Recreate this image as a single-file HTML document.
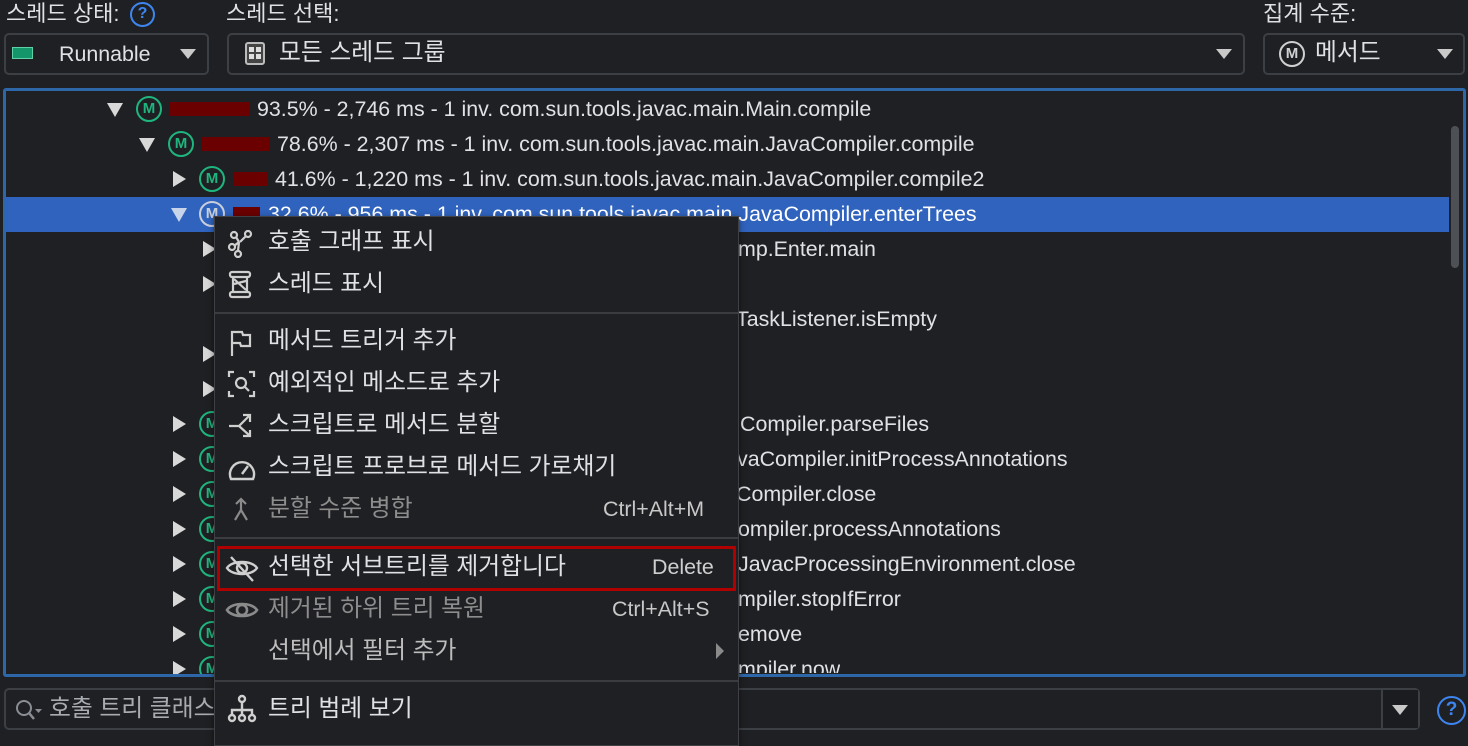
<!DOCTYPE html><html><head><meta charset="utf-8"><style>
*{box-sizing:border-box;margin:0;padding:0}
body{width:1468px;height:735px;background:#1f2023;color:#dfe1e5;font-family:"Liberation Sans","Noto Sans CJK KR",sans-serif;font-size:21.4px;position:relative;overflow:hidden}
.a{position:absolute;white-space:nowrap}
.k{font-size:22px}
.box{position:absolute;border:2px solid #3c3f44;border-radius:5px;background:#1f2023}
.tri{position:absolute;width:0;height:0;border-left:8px solid transparent;border-right:8px solid transparent;border-top:10px solid #c9c9c9}
.rt{position:absolute;width:0;height:0;border-top:8px solid transparent;border-bottom:8px solid transparent;border-left:13px solid #d8d8d8}
.dn{position:absolute;width:0;height:0;border-left:8px solid transparent;border-right:8px solid transparent;border-top:14px solid #d8d8d8}
.m{position:absolute;width:26px;height:26px;border:2.5px solid #1fb57e;border-radius:50%;color:#1fb57e;font-size:15px;font-weight:bold;text-align:center;line-height:21px}
.bar{position:absolute;height:14px;background:#6b0000}
.row{position:absolute;height:35px;line-height:35px}
.mi{position:absolute;left:268px;white-space:nowrap;line-height:30px;font-size:23.8px}
.sep{position:absolute;left:0;right:0;height:2px;background:#3a3c40}
</style></head><body>
<div class="a k" style="left:6px;top:0;line-height:28px">스레드 상태:</div>
<div class="a" style="left:130px;top:2px;width:25px;height:25px;border:2.5px solid #3d86f0;border-radius:50%;color:#3d86f0;text-align:center;font-size:16px;line-height:20px;font-weight:bold">?</div>
<div class="a k" style="left:226px;top:0;line-height:28px">스레드 선택:</div>
<div class="a k" style="left:1263px;top:0;line-height:28px">집계 수준:</div>

<div class="box" style="left:4px;top:33px;width:205px;height:42px"></div>
<div class="a" style="left:12px;top:47px;width:21px;height:12px;background:#14956a;border:1px solid #5fd0a5"></div>
<div class="a" style="left:59px;top:38px;line-height:32px">Runnable</div>
<div class="tri" style="left:180px;top:49px"></div>

<div class="box" style="left:227px;top:33px;width:1018px;height:42px"></div>
<div class="a" style="left:245px;top:42px;width:20px;height:23px;border:2px solid #bbb;border-radius:3px;background:#444"></div>
<div class="a" style="left:249px;top:47px;width:5px;height:5px;background:#ddd;box-shadow:7px 0 #ddd,0 7px #ddd,7px 7px #ddd"></div>
<div class="a" style="left:279px;top:37px;line-height:32px;font-size:23.8px">모든 스레드 그룹</div>
<div class="tri" style="left:1216px;top:49px"></div>

<div class="box" style="left:1263px;top:33px;width:202px;height:42px"></div>
<div class="a" style="left:1279px;top:41px;width:26px;height:26px;border:2.5px solid #d0d0d0;border-radius:50%;color:#d0d0d0;font-size:15px;font-weight:bold;text-align:center;line-height:21px">M</div>
<div class="a" style="left:1315px;top:37px;line-height:32px;font-size:23.8px">메서드</div>
<div class="tri" style="left:1437px;top:49px"></div>

<div class="a" style="left:3px;top:88px;width:1463px;height:589px;border:3px solid #2e67a7;border-radius:3px;overflow:hidden">
<div style="position:absolute;left:1445px;top:35px;width:8px;height:142px;background:#4d5055;border-radius:4px"></div>
<div style="position:absolute;left:0;top:106px;width:1443px;height:35px;background:#2f63bd"></div>
</div>

<div class="dn" style="left:107px;top:103px"></div><div class="m" style="left:136px;top:96px">M</div><div class="bar" style="left:170px;top:102px;width:79px"></div><div class="row a" style="left:257px;top:92px">93.5% - 2,746 ms - 1 inv. com.sun.tools.javac.main.Main.compile</div>
<div class="dn" style="left:139px;top:138px"></div><div class="m" style="left:168px;top:131px">M</div><div class="bar" style="left:201px;top:137px;width:69px"></div><div class="row a" style="left:277px;top:127px">78.6% - 2,307 ms - 1 inv. com.sun.tools.javac.main.JavaCompiler.compile</div>
<div class="rt" style="left:173px;top:171px"></div><div class="m" style="left:199px;top:166px">M</div><div class="bar" style="left:233px;top:172px;width:35px"></div><div class="row a" style="left:275px;top:162px">41.6% - 1,220 ms - 1 inv. com.sun.tools.javac.main.JavaCompiler.compile2</div>
<div class="dn" style="left:171px;top:208px;border-top-color:#c8d4ea"></div><div class="m" style="left:199px;top:201px;border-color:#c9cfdb;color:#c9cfdb">M</div><div class="bar" style="left:233px;top:207px;width:27px"></div><div class="row a" style="left:268px;top:197px;color:#fff">32.6% - 956 ms - 1 inv. com.sun.tools.javac.main.JavaCompiler.enterTrees</div>

<div class="rt" style="left:203px;top:241px"></div>
<div class="rt" style="left:203px;top:276px"></div>
<div class="rt" style="left:203px;top:346px"></div>
<div class="rt" style="left:203px;top:381px"></div>
<div class="rt" style="left:173px;top:416px"></div><div class="m" style="left:199px;top:411px">M</div>
<div class="rt" style="left:173px;top:451px"></div><div class="m" style="left:199px;top:446px">M</div>
<div class="rt" style="left:173px;top:486px"></div><div class="m" style="left:199px;top:481px">M</div>
<div class="rt" style="left:173px;top:521px"></div><div class="m" style="left:199px;top:516px">M</div>
<div class="rt" style="left:173px;top:556px"></div><div class="m" style="left:199px;top:551px">M</div>
<div class="rt" style="left:173px;top:591px"></div><div class="m" style="left:199px;top:586px">M</div>
<div class="rt" style="left:173px;top:626px"></div><div class="m" style="left:199px;top:621px">M</div>
<div class="a" style="left:170px;top:656px;width:60px;height:18px;overflow:hidden"><div class="rt" style="left:3px;top:5px"></div><div class="m" style="left:29px;top:0px">M</div></div>

<div class="row a" style="left:738px;top:232px">mp.Enter.main</div>
<div class="row a" style="left:736px;top:302px">TaskListener.isEmpty</div>
<div class="row a" style="left:740px;top:407px">Compiler.parseFiles</div>
<div class="row a" style="left:737px;top:442px">vaCompiler.initProcessAnnotations</div>
<div class="row a" style="left:736px;top:477px">Compiler.close</div>
<div class="row a" style="left:738px;top:512px">ompiler.processAnnotations</div>
<div class="row a" style="left:738px;top:547px">JavacProcessingEnvironment.close</div>
<div class="row a" style="left:738px;top:582px">mpiler.stopIfError</div>
<div class="row a" style="left:738px;top:617px">emove</div>
<div class="a" style="left:738px;top:652px;height:21px;overflow:hidden;line-height:35px">mpiler.now</div>

<div class="box" style="left:4px;top:688px;width:1416px;height:42px"></div>
<div class="a" style="left:1381px;top:690px;width:2px;height:38px;background:#3c3f44"></div>
<div class="a" style="left:1383px;top:690px;width:35px;height:38px;background:#1b1c1f"></div>
<div class="tri" style="left:1392px;top:705px"></div>
<svg class="a" style="left:14px;top:697px" width="32" height="26" viewBox="0 0 32 26"><circle cx="10" cy="11" r="7" fill="none" stroke="#8a8e94" stroke-width="2"/><line x1="15" y1="16" x2="20" y2="22" stroke="#8a8e94" stroke-width="2.5"/><path d="M21 12h7l-3.5 4z" fill="#8a8e94"/></svg>
<div class="a" style="left:49px;top:693px;line-height:32px;color:#a8abb0;font-size:23.8px">호출 트리 클래스</div>
<div class="a" style="left:1437px;top:696px;width:29px;height:29px;border:2.5px solid #3d86f0;border-radius:50%;color:#3d86f0;text-align:center;font-size:19px;line-height:24px;font-weight:bold">?</div>

<div class="a" style="left:214px;top:216px;width:525px;height:530px;background:#1f2023;border:1px solid #3e4045;box-shadow:0 2px 6px rgba(0,0,0,.5)">
<div class="sep" style="top:95px"></div>
<div class="sep" style="top:320px"></div>
<div class="sep" style="top:463px"></div>
<div style="position:absolute;left:2px;top:329px;width:519px;height:45px;border:3px solid #b00000"></div>
</div>
<svg class="a" style="left:226px;top:228px" width="30" height="30" viewBox="0 0 30 30" fill="none" stroke="#cfcfcf" stroke-width="2.2"><circle cx="8" cy="7" r="3"/><circle cx="22" cy="6" r="3"/><circle cx="6" cy="19" r="3"/><circle cx="12" cy="26" r="3"/><path d="M10 9l3 5M20 8l-6 6M13 14l-5 4M13 14l-1 9"/></svg>
<svg class="a" style="left:228px;top:270px" width="26" height="30" viewBox="0 0 26 30" fill="none" stroke="#cfcfcf" stroke-width="2.2"><rect x="2" y="2" width="20" height="5" rx="2"/><rect x="2" y="22" width="20" height="5" rx="2"/><path d="M5 7v15M19 7v15M6 9l12 11M6 14l12-3"/></svg>
<div class="mi" style="top:227px">호출 그래프 표시</div>
<div class="mi" style="top:269px">스레드 표시</div>
<svg class="a" style="left:228px;top:328px" width="26" height="30" viewBox="0 0 26 30" fill="none" stroke="#cfcfcf" stroke-width="2.2"><path d="M4 28V4h10l1 3h7v11h-9l-1-3H4"/></svg>
<div class="mi" style="top:326px">메서드 트리거 추가</div>
<svg class="a" style="left:227px;top:369px" width="30" height="30" viewBox="0 0 30 30" fill="none" stroke="#cfcfcf" stroke-width="2.2"><path d="M2 8V3h5M22 3h5v5M27 22v5h-5M7 27H2v-5"/><circle cx="14" cy="14" r="5"/><path d="M18 18l4 4"/></svg>
<div class="mi" style="top:368px">예외적인 메소드로 추가</div>
<svg class="a" style="left:227px;top:411px" width="30" height="30" viewBox="0 0 30 30" fill="none" stroke="#cfcfcf" stroke-width="2.2"><path d="M2 15h10l10-10M16 4h7v7M12 15l10 9M16 25h7v-6"/></svg>
<div class="mi" style="top:410px">스크립트로 메서드 분할</div>
<svg class="a" style="left:227px;top:453px" width="32" height="30" viewBox="0 0 32 30" fill="none" stroke="#cfcfcf" stroke-width="2.4"><path d="M4 26a12 12 0 1 1 22 0z"/><path d="M15 21l6-8"/></svg>
<div class="mi" style="top:452px">스크립트 프로브로 메서드 가로채기</div>
<svg class="a" style="left:229px;top:496px" width="24" height="28" viewBox="0 0 24 28" fill="none" stroke="#8a8a8a" stroke-width="2.2"><path d="M12 4v10l-6 10M12 14l6 10M7 8l5-5 5 5"/></svg>
<div class="mi" style="top:494px;color:#8d8d8d">분할 수준 병합</div><div class="a" style="left:603px;top:494px;line-height:30px;color:#c8c8c8">Ctrl+Alt+M</div>
<svg class="a" style="left:225px;top:553px" width="34" height="30" viewBox="0 0 34 30" fill="none" stroke="#cfcfcf" stroke-width="2.4"><path d="M2 15c5-8 25-8 30 0c-5 8-25 8-30 0z"/><circle cx="17" cy="15" r="5"/><path d="M6 4l22 24"/></svg>
<div class="mi" style="top:552px">선택한 서브트리를 제거합니다</div><div class="a" style="left:652px;top:552px;line-height:30px;color:#cfcfcf">Delete</div>
<svg class="a" style="left:225px;top:595px" width="34" height="30" viewBox="0 0 34 30" fill="none" stroke="#8a8a8a" stroke-width="2.6"><path d="M2 15c5-8 25-8 30 0c-5 8-25 8-30 0z"/><circle cx="17" cy="15" r="5"/></svg>
<div class="mi" style="top:594px;color:#8d8d8d">제거된 하위 트리 복원</div><div class="a" style="left:612px;top:594px;line-height:30px;color:#c8c8c8">Ctrl+Alt+S</div>
<div class="mi" style="top:636px;color:#bdbdbd">선택에서 필터 추가</div>
<div class="a" style="left:716px;top:643px;width:0;height:0;border-top:8px solid transparent;border-bottom:8px solid transparent;border-left:8px solid #8a8a8a"></div>
<svg class="a" style="left:227px;top:694px" width="30" height="30" viewBox="0 0 30 30" fill="none" stroke="#cfcfcf" stroke-width="2.4"><circle cx="15" cy="5" r="3"/><circle cx="5" cy="24" r="3"/><circle cx="15" cy="24" r="3"/><circle cx="25" cy="24" r="3"/><path d="M15 8v13M5 21v-5h20v5"/></svg>
<div class="mi" style="top:694px">트리 범례 보기</div>
</body></html>
